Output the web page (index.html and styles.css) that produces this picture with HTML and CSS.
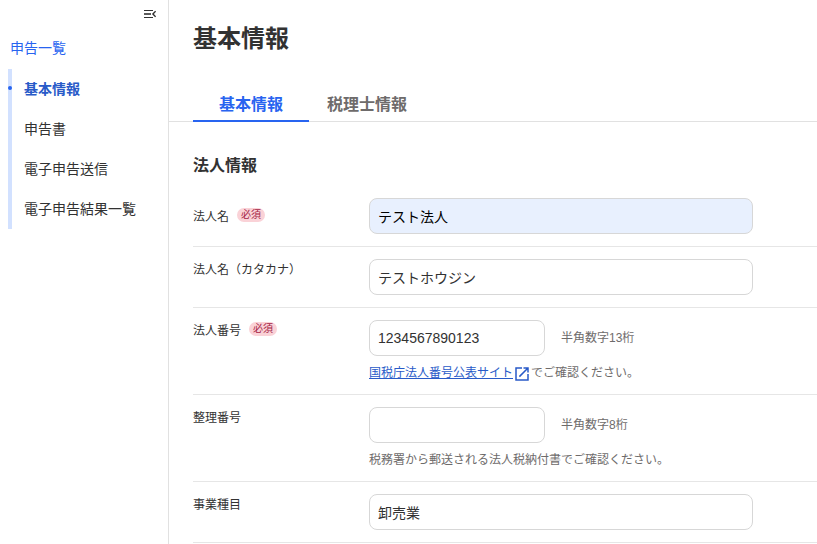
FILE: index.html
```html
<!DOCTYPE html>
<html lang="ja">
<head>
    <meta charset="UTF-8">
    <meta name="viewport" content="width=device-width, initial-scale=1.0">
    <title>基本情報</title>
    <link rel="stylesheet" href="styles.css">
</head>
<body>
    <div class="layout">
        <aside class="sidebar">
            <button type="button" class="menu-toggle" aria-label="メニューを閉じる">
                <svg width="12" height="8" viewBox="0 0 12 8" fill="none" stroke="#323232">
                    <path d="M0 .5h9M0 7.5h9" stroke-width="1"/>
                    <path d="M0 4h7" stroke-width="2" stroke-opacity=".8"/>
                    <path d="M11.600 1.200L8.900 4l2.700 2.800" stroke-width="1.400"/>
                </svg>
            </button>
            <a href="#" class="back-link">申告一覧</a>
            <nav>
                <ul class="menu">
                    <li><a href="#" class="active">基本情報</a></li>
                    <li><a href="#">申告書</a></li>
                    <li><a href="#">電子申告送信</a></li>
                    <li><a href="#">電子申告結果一覧</a></li>
                </ul>
            </nav>
        </aside>

        <main class="content">
            <h1>基本情報</h1>
            <div class="tabs" role="tablist">
                <button type="button" class="tab active" role="tab" aria-selected="true">基本情報</button>
                <button type="button" class="tab" role="tab" aria-selected="false">税理士情報</button>
            </div>

            <form class="form">
                <h2>法人情報</h2>
                <div class="row row-center">
                    <div class="row-label">
                        <label for="name">法人名</label>
                        <span class="required">必須</span>
                    </div>
                    <div class="row-field">
                        <input type="text" id="name" class="filled" value="テスト法人" required>
                    </div>
                </div>
                <div class="row">
                    <div class="row-label">
                        <label for="kana">法人名（カタカナ）</label>
                    </div>
                    <div class="row-field">
                        <input type="text" id="kana" value="テストホウジン">
                    </div>
                </div>
                <div class="row">
                    <div class="row-label">
                        <label for="number">法人番号</label>
                        <span class="required">必須</span>
                    </div>
                    <div class="row-field">
                        <div class="field-line">
                            <input type="text" id="number" class="short" value="1234567890123" required>
                            <span>半角数字13桁</span>
                        </div>
                        <p class="note"><a href="#">国税庁法人番号公表サイト<svg width="18" height="18" viewBox="0 0 24 24" fill="currentColor"><path d="M19 19H5V5h7V3H3v18h18v-9h-2v7zM14 3v2h3.600l-9.800 9.800 1.400 1.400L19 6.400V10h2V3h-7z"/></svg></a>でご確認ください。</p>
                    </div>
                </div>
                <div class="row">
                    <div class="row-label">
                        <label for="reference">整理番号</label>
                    </div>
                    <div class="row-field">
                        <div class="field-line">
                            <input type="text" id="reference" class="short">
                            <span>半角数字8桁</span>
                        </div>
                        <p class="note">税務署から郵送される法人税納付書でご確認ください。</p>
                    </div>
                </div>
                <div class="row">
                    <div class="row-label">
                        <label for="business">事業種目</label>
                    </div>
                    <div class="row-field">
                        <input type="text" id="business" value="卸売業">
                    </div>
                </div>
            </form>
        </main>
    </div>
</body>
</html>
```
FILE: styles.css
```css
* {
    box-sizing: border-box;
}
body {
    margin: 0;
    font-family: "Liberation Sans", "Noto Sans CJK JP", sans-serif;
    font-size: 12px;
    line-height: 18px;
    color: #323232;
    background: #fff;
}
button, input {
    font-family: inherit;
    color: inherit;
}
.layout {
    display: flex;
    min-height: 100vh;
}

/* sidebar */
.sidebar {
    display: flex;
    flex-direction: column;
    flex: 0 0 169px;
    border-right: 1px solid #e1e1e1;
    font-size: 14px;
}
.menu-toggle {
    display: flex;
    align-items: center;
    justify-content: center;
    align-self: flex-end;
    width: 28px;
    height: 28px;
    margin-right: 4px;
    padding: 0;
    border: none;
    background: none;
    cursor: pointer;
}
.back-link {
    padding-left: 10px;
    line-height: 40px;
    color: #2864f0;
    text-decoration: none;
}
.menu {
    margin: 1px 0 0 8px;
    padding: 0;
    border-left: 4px solid #d2e1ff;
    list-style: none;
}
.menu a {
    display: block;
    position: relative;
    padding-left: 12px;
    line-height: 40px;
    color: #323232;
    text-decoration: none;
}
.menu .active {
    color: #285ac8;
    font-weight: bold;
}
.menu .active::before {
    content: "";
    position: absolute;
    top: 17px;
    left: -4px;
    width: 4px;
    height: 4px;
    border-radius: 50%;
    background: #2864f0;
}

/* main */
.content {
    flex: 1;
    min-width: 0;
}
h1 {
    margin: 20px 24px 28px;
    font-size: 24px;
    line-height: 38px;
}
.tabs {
    display: flex;
    padding-left: 24px;
    border-bottom: 1px solid #e1e1e1;
}
.tab {
    min-width: 116px;
    height: 36px;
    margin-bottom: -1px;
    padding: 0 16px;
    border: none;
    border-bottom: 2px solid transparent;
    background: none;
    font-size: 16px;
    font-weight: bold;
    color: #6e6b6b;
    cursor: pointer;
}
.tab.active {
    border-color: #2864f0;
    color: #2864f0;
}

/* form */
.form {
    padding: 32px 0 0 24px;
}
h2 {
    margin: 0 0 8px;
    font-size: 16px;
    line-height: 24px;
}
.row {
    display: flex;
    padding: 12px 0;
    border-bottom: 1px solid #e6e6e6;
}
.row-label {
    display: flex;
    gap: 8px;
    flex: 0 0 176px;
    padding-top: 2px;
}
.row-center {
    align-items: center;
}
.required {
    height: 14px;
    padding: 0 4px;
    border-radius: 7px;
    background: #fad2d7;
    color: #a51e46;
    font-size: 10px;
    line-height: 14px;
}
.row-field {
    flex: 1;
    min-width: 0;
    color: #6e6b6b;
}
.field-line {
    display: flex;
    align-items: center;
    gap: 16px;
}
input[type="text"] {
    display: block;
    width: 100%;
    max-width: 384px;
    height: 36px;
    padding: 0 8px;
    border: 1px solid #d7d7d7;
    border-radius: 8px;
    background: #fff;
    color: #323232;
    font-size: 14px;
}
input[type="text"].filled {
    background: #e8f0fe;
    color: #000;
}
input[type="text"].short {
    width: 176px;
}
.note {
    margin: 8px 0 0;
}
.note a {
    color: #285ac8;
}
.note svg {
    margin: -2px 0;
    vertical-align: middle;
}
```
